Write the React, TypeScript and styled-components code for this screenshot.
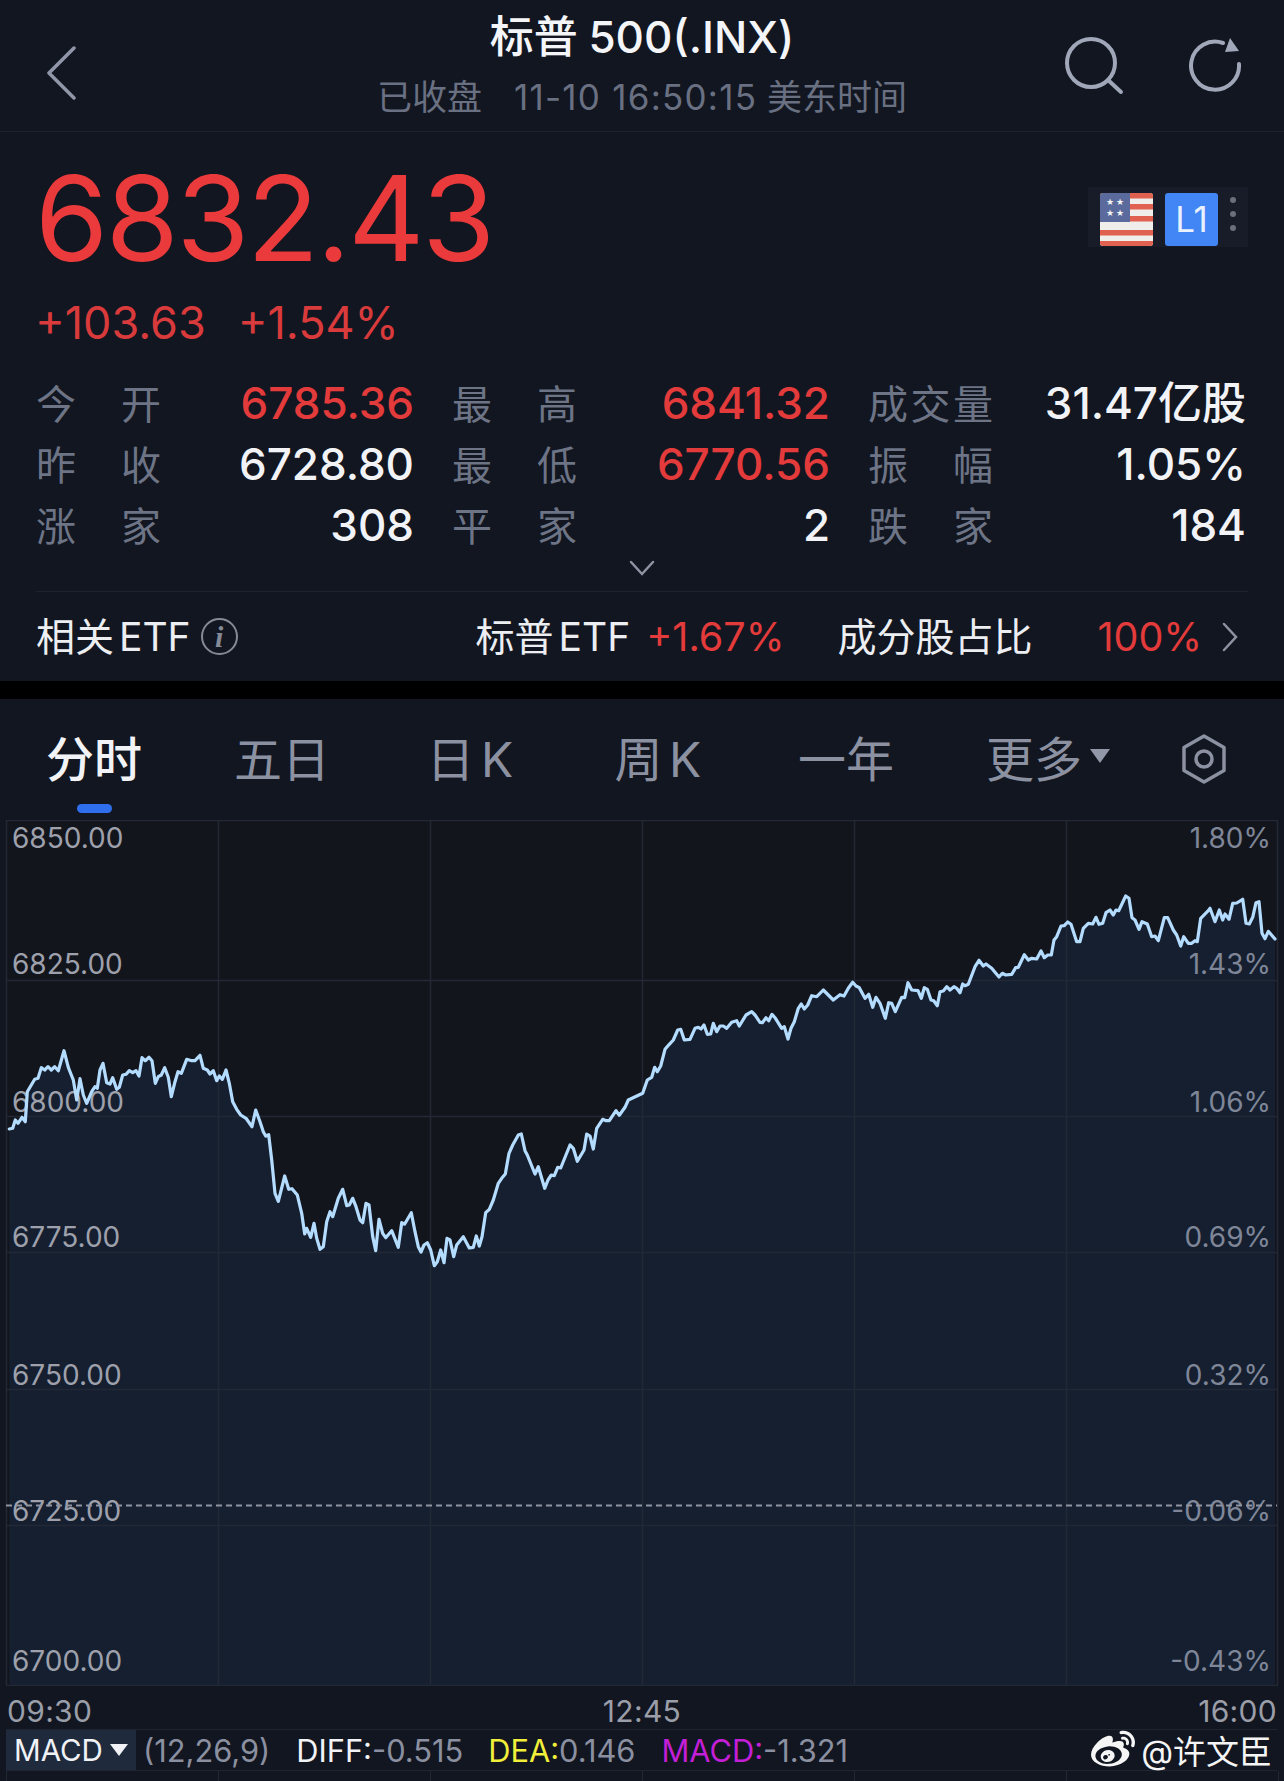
import React from "react";
import styled, { createGlobalStyle } from "styled-components";
import { FaWeibo } from "react-icons/fa";

const GlobalStyle = createGlobalStyle`
  html, body {
    margin: 0;
    padding: 0;
    background: #121620;
  }
  body {
    font-family: "Inter", "Noto Sans CJK SC", sans-serif;
  }
`;

const RED = "#e33b3b";
const GRID = "#232835";

const Page = styled.div`
  width: 1284px;
  height: 1781px;
  overflow: hidden;
  background: #121620;
  color: #f2f3f6;
`;

const Header = styled.header`
  height: 132px;
  box-sizing: border-box;
  border-bottom: 1px solid #1d212c;
  display: grid;
  grid-template-columns: 250px 1fr 250px;
`;

const BackCell = styled.div`
  padding: 46px 0 0 46px;
`;

const TitleCell = styled.div`
  padding-top: 12px;
  text-align: center;
`;

const Title = styled.div`
  font-size: 44px;
  line-height: 50px;
  font-weight: 500;
  color: #f4f5f8;
  word-spacing: -1px;
`;

const Subtitle = styled.div`
  margin-top: 17px;
  font-size: 35px;
  line-height: 36px;
  color: #697082;
  white-space: nowrap;
`;

const SubtitleStatus = styled.span`
  margin-right: 32px;
`;

const SubtitleTime = styled.span`
  letter-spacing: 1.25px;
`;

const IconCell = styled.div`
  display: flex;
  justify-content: flex-end;
  gap: 65px;
  padding: 36px 41px 0 0;
  align-items: flex-start;
  & > svg {
    flex-shrink: 0;
  }
`;

const Quote = styled.section`
  padding: 30px 36px 0 36px;
`;

const PriceRow = styled.div`
  display: flex;
  justify-content: space-between;
  align-items: flex-start;
`;

const Price = styled.div`
  margin-left: -1px;
  font-size: 118px;
  line-height: 112px;
  color: #ea3a3b;
  letter-spacing: -2.35px;
`;

const BadgePanel = styled.div`
  margin-top: 25px;
  width: 160px;
  height: 60px;
  box-sizing: border-box;
  padding: 6px 0 0 12px;
  display: flex;
  gap: 12px;
  background: #181c28;
`;

const LevelBadge = styled.div`
  width: 53px;
  height: 53px;
  border-radius: 3px;
  background: #4285f4;
  color: #eaf1fe;
  font-size: 35px;
  line-height: 53px;
  text-align: center;
`;

const Dots = styled.div`
  display: flex;
  flex-direction: column;
  gap: 8px;
  padding-top: 4px;
`;

const Dot = styled.i`
  display: block;
  width: 6px;
  height: 6px;
  border-radius: 50%;
  background: #6b6f7a;
`;

const ChangeRow = styled.div`
  margin: 24px 0 0 -1px;
  display: flex;
  gap: 32px;
  font-size: 45px;
  line-height: 50px;
  color: #d93a3b;
`;

const StatsGrid = styled.div`
  margin-top: 23px;
  display: grid;
  grid-template-columns: repeat(3, 378px);
  column-gap: 38px;
  grid-auto-rows: 61px;
`;

const StatCell = styled.div`
  display: flex;
  justify-content: space-between;
  align-items: center;
`;

const StatLabel = styled.span`
  width: 125px;
  display: flex;
  justify-content: space-between;
  font-size: 40px;
  color: #6d7486;
`;

const StatValue = styled.span<{ $up?: boolean }>`
  padding-top: 2px;
  font-size: 44px;
  line-height: 52px;
  font-weight: 500;
  color: ${(p) => (p.$up ? RED : "#f2f3f6")};
  white-space: nowrap;
`;

const ExpandRow = styled.div`
  height: 37px;
  padding-top: 6px;
  box-sizing: border-box;
  display: flex;
  justify-content: center;
  margin-left: -1px;
`;

const EtfRow = styled.div`
  margin: 0 36px;
  height: 90px;
  box-sizing: border-box;
  border-top: 1px solid #1f232e;
  display: flex;
  align-items: center;
  font-size: 39px;
  line-height: 46px;
  color: #eceef2;
  white-space: nowrap;
`;

const EtfName = styled.span`
  word-spacing: -6px;
`;

const InfoMark = styled.span`
  flex-shrink: 0;
  margin-left: 10px;
  width: 33px;
  height: 33px;
  border: 2px solid #858a97;
  border-radius: 50%;
  display: flex;
  align-items: center;
  justify-content: center;
  font-family: "Liberation Serif", serif;
  font-style: italic;
  font-weight: 700;
  font-size: 30px;
  color: #858a97;
`;

const EtfPart = styled.span<{ $left: number }>`
  margin-left: ${(p) => p.$left}px;
`;

const EtfSpaced = styled(EtfPart)`
  word-spacing: -6px;
`;

const EtfRed = styled(EtfPart)`
  color: ${RED};
  font-size: 39.5px;
`;

const EtfArrow = styled(EtfPart)`
  display: flex;
`;

const BlackBand = styled.div`
  height: 18px;
  background: #000;
`;

const Tabs = styled.nav`
  height: 121px;
  box-sizing: border-box;
  display: grid;
  grid-template-columns: repeat(6, 188px) 1fr;
  align-items: start;
  padding-top: 27px;
`;

const Tab = styled.div<{ $active?: boolean }>`
  position: relative;
  display: flex;
  justify-content: center;
  align-items: center;
  height: 60px;
  font-size: 48px;
  word-spacing: -7px;
  font-weight: ${(p) => (p.$active ? 500 : 400)};
  color: ${(p) => (p.$active ? "#f2f3f6" : "#8b91a1")};
  white-space: nowrap;
`;

const MoreTab = styled(Tab)`
  gap: 8px;
  padding-left: 28px;
`;

const ActiveMark = styled.i`
  position: absolute;
  left: 77px;
  top: 78px;
  width: 35px;
  height: 9px;
  border-radius: 4.5px;
  background: #2f6fed;
`;

const Caret = styled.i`
  width: 0;
  height: 0;
  border-left: 10px solid transparent;
  border-right: 10px solid transparent;
  border-top: 14px solid #9298a8;
`;

const SettingsCell = styled.div`
  display: flex;
  justify-content: center;
  padding-top: 8px;
  margin-left: -5px;
`;

const ChartSvg = styled.svg`
  display: block;
`;

const AxisText = styled.text<{ $tone: string }>`
  font-family: "Inter", sans-serif;
  font-size: 28px;
  fill: ${(p) => p.$tone};
`;

const TimeAxis = styled.div`
  height: 43px;
  box-sizing: border-box;
  padding: 6px 7px 0 7px;
  display: grid;
  grid-template-columns: 1fr 1fr 1fr;
  align-items: center;
  font-size: 30px;
  letter-spacing: 0.3px;
  color: #9a9ea9;
  & > span:nth-child(2) {
    text-align: center;
  }
  & > span:nth-child(3) {
    text-align: right;
  }
`;

const IndicatorRow = styled.div`
  margin: 0 7px 0 6px;
  height: 42px;
  box-sizing: border-box;
  border-top: 1px solid #1f2430;
  border-bottom: 1px solid #1f2430;
  display: flex;
  align-items: center;
  font-size: 30.8px;
  white-space: nowrap;
  color: #8b90a0;
`;

const IndicatorPicker = styled.div`
  width: 130px;
  height: 40px;
  box-sizing: border-box;
  padding-left: 8px;
  display: flex;
  align-items: center;
  gap: 7px;
  font-size: 29.5px;
  background: #1f2a3d;
  color: #f0f2f6;
`;

const PickerCaret = styled.i`
  width: 0;
  height: 0;
  border-left: 9px solid transparent;
  border-right: 9px solid transparent;
  border-top: 12px solid #f0f2f6;
`;

const Param = styled.span<{ $left: number }>`
  margin-left: ${(p) => p.$left}px;
`;

const Key = styled.span<{ $tone: string }>`
  color: ${(p) => p.$tone};
`;

const Watermark = styled.div`
  margin-left: auto;
  margin-right: 5px;
  display: flex;
  align-items: center;
  gap: 6px;
  font-size: 33px;
  color: #f5f5f5;
`;

const Tail = styled.div`
  height: 11px;
  margin-left: 6px;
  background: repeating-linear-gradient(
    to right,
    ${GRID} 0 1px,
    transparent 1px 212px
  );
`;

const trace = (ox: number, oy: number, pts: number[][]) =>
  pts.map(([x, y]) => [ox + x / 3, oy + y / 3]);

// hand-traced from the intraday curve, in 3x crop coordinates
const curve = [
  ...trace(0, 1040, [
    [28, 267], [38, 265], [46, 240], [54, 250], [66, 232], [76, 245], [82, 155], [92, 138], [104, 118], [114, 115],
    [124, 83], [134, 90], [144, 80], [154, 90], [164, 80], [175, 92], [192, 32], [205, 82], [220, 120], [230, 180],
    [240, 116], [250, 165], [260, 190], [275, 155], [285, 140], [292, 145], [300, 90], [309, 70], [320, 128], [330, 132],
    [338, 113], [350, 148], [358, 142], [368, 105], [378, 103], [388, 92], [398, 98], [408, 92], [417, 108], [426, 53],
    [436, 62], [447, 52], [456, 62], [466, 130], [475, 110], [484, 105], [494, 83], [505, 112], [514, 170], [525, 125],
    [534, 95], [544, 100], [560, 58], [575, 62], [585, 62], [600, 46], [610, 85], [622, 90], [630, 102], [640, 92],
    [650, 122], [658, 108], [667, 118], [678, 90], [688, 130], [698, 185], [710, 208], [722, 225], [738, 235], [756, 260],
    [767, 210], [780, 245], [790, 275], [797, 288], [806, 284], [815, 360], [825, 460], [835, 484], [854, 408], [866, 448],
    [876, 446], [892, 465], [905, 520], [914, 582], [920, 565], [932, 592], [942, 550], [950, 595],
  ]),
  ...trace(320, 1100, [
    [0, 448], [10, 440], [20, 365], [30, 335], [38, 350], [55, 295], [68, 268], [80, 317], [88, 315], [98, 295],
    [108, 320], [120, 360], [128, 368], [138, 310], [147, 315], [158, 410], [167, 452], [177, 358], [188, 400], [197, 413],
    [215, 392], [235, 442], [245, 368], [254, 372], [274, 338], [285, 395], [295, 440], [303, 456], [312, 435], [322, 428],
    [332, 450], [343, 497], [352, 485], [362, 450], [372, 488], [381, 415], [390, 420], [401, 470], [410, 435], [430, 410],
    [448, 444], [460, 442], [469, 408], [478, 438], [486, 410], [497, 338], [508, 328], [520, 300], [535, 250], [545, 235],
    [556, 222], [567, 160], [578, 135], [595, 105], [604, 102], [615, 152], [622, 165], [645, 222], [655, 200], [674, 265],
    [684, 240], [694, 225], [703, 227], [713, 202], [722, 204], [750, 135], [760, 145], [772, 184], [792, 150], [800, 102],
    [810, 108], [820, 147], [830, 85], [848, 58], [858, 62], [868, 62], [888, 32], [898, 46], [915, 22], [925, 0],
  ]),
  ...trace(640, 950, [
    [8, 430], [22, 390], [35, 382], [44, 352], [52, 365], [62, 348], [75, 298], [88, 283], [100, 270], [113, 240],
    [122, 238], [133, 270], [150, 268], [165, 235], [175, 232], [183, 237], [192, 225], [202, 253], [212, 252], [220, 220],
    [230, 245], [240, 228], [250, 228], [260, 235], [275, 217], [290, 212], [298, 228], [318, 195], [335, 185], [345, 195],
    [360, 217], [367, 218], [378, 203], [386, 212], [396, 193], [405, 203], [425, 235], [433, 230], [444, 267], [453, 235],
    [463, 215], [475, 175], [484, 162], [493, 177], [503, 165], [515, 137], [530, 140], [550, 120], [580, 150], [600, 134],
    [612, 138], [625, 115], [638, 97], [648, 108], [658, 113], [675, 145], [686, 133], [698, 172], [708, 142], [720, 160],
    [736, 205], [746, 158], [755, 160], [766, 185], [785, 142], [794, 143], [804, 98], [815, 120], [834, 122], [844, 145],
    [853, 113], [862, 118], [873, 150], [881, 152], [892, 167], [900, 125], [910, 123], [920, 110], [930, 120], [942, 110],
    [950, 115],
  ]),
  ...trace(960, 880, [
    [0, 338], [8, 312], [15, 317], [25, 313], [45, 260], [57, 241], [70, 258], [78, 252], [95, 265], [105, 277],
    [117, 291], [127, 280], [137, 285], [155, 283], [167, 263], [175, 262], [193, 224], [205, 240], [215, 235], [230, 237],
    [243, 213], [253, 233], [263, 225], [274, 225], [282, 180], [290, 170], [303, 138], [313, 137], [323, 126], [333, 133],
    [350, 185], [360, 185], [370, 145], [385, 130], [398, 132], [408, 112], [417, 133], [428, 130], [438, 98], [450, 90],
    [460, 105], [468, 90], [476, 92], [497, 48], [507, 55], [516, 113], [525, 120], [537, 148], [546, 125], [562, 132],
    [575, 170], [585, 168], [595, 182], [613, 113], [623, 113], [640, 150], [650, 165], [662, 198], [671, 170], [685, 190],
    [695, 190], [705, 182], [712, 185], [722, 115], [745, 92], [750, 85], [765, 125], [778, 90], [788, 120], [795, 102],
    [807, 118], [818, 70], [830, 69], [848, 58], [858, 130], [868, 132], [878, 112], [888, 68], [897, 65], [906, 160],
    [915, 176], [925, 154], [945, 177],
  ]),
];

const linePath = curve.map(([x, y], i) => `${i ? "L" : "M"}${x.toFixed(1)} ${y.toFixed(1)}`).join(" ");
const CHART_BOTTOM = 1685;
const areaPath = `${linePath} L${curve[curve.length - 1][0].toFixed(1)} ${CHART_BOTTOM} L${curve[0][0].toFixed(1)} ${CHART_BOTTOM} Z`;

const gridRows = [820, 980, 1116, 1252, 1389, 1525, 1685];
const gridCols = [6, 218, 430, 642, 854, 1066, 1277];

const axisLabels = [
  { y: 848, price: "6850.00", pct: "1.80%" },
  { y: 974, price: "6825.00", pct: "1.43%" },
  { y: 1112, price: "6800.00", pct: "1.06%" },
  { y: 1247, price: "6775.00", pct: "0.69%" },
  { y: 1385, price: "6750.00", pct: "0.32%" },
  { y: 1521, price: "6725.00", pct: "-0.06%" },
  { y: 1671, price: "6700.00", pct: "-0.43%" },
];

const stats = [
  { label: ["今", "开"], value: "6785.36", up: true },
  { label: ["最", "高"], value: "6841.32", up: true },
  { label: ["成", "交", "量"], value: "31.47亿股" },
  { label: ["昨", "收"], value: "6728.80" },
  { label: ["最", "低"], value: "6770.56", up: true },
  { label: ["振", "幅"], value: "1.05%" },
  { label: ["涨", "家"], value: "308" },
  { label: ["平", "家"], value: "2" },
  { label: ["跌", "家"], value: "184" },
];

const tabs = ["五日", "日 K", "周 K", "一年"];

const ICON = "#a0a7b8";

const BackIcon = () => (
  <svg width="30" height="54" viewBox="0 0 30 54" fill="none">
    <path d="M28 2 L3 27 L28 52" stroke="#9097a8" strokeWidth="3.5" strokeLinecap="round" strokeLinejoin="round" />
  </svg>
);

const SearchIcon = () => (
  <svg width="60" height="60" viewBox="0 0 60 60" fill="none">
    <circle cx="27" cy="27" r="24" stroke={ICON} strokeWidth="4" />
    <path d="M44 44 L57 56" stroke={ICON} strokeWidth="4" strokeLinecap="round" />
  </svg>
);

const RefreshIcon = () => (
  <svg width="54" height="56" viewBox="0 0 54 56" fill="none">
    <path d="M50 28 A24 24 0 1 1 34 7" stroke={ICON} strokeWidth="4" strokeLinecap="round" />
    <path d="M41 2 L50 15 L36 16 Z" fill={ICON} />
  </svg>
);

const ChevronDown = () => (
  <svg width="26" height="16" viewBox="0 0 26 16" fill="none">
    <path d="M2 2 L13 14 L24 2" stroke="#8d93a2" strokeWidth="2.5" strokeLinecap="round" />
  </svg>
);

const ChevronRight = () => (
  <svg width="18" height="30" viewBox="0 0 18 30" fill="none">
    <path d="M3 2 L15 15 L3 28" stroke="#8d93a2" strokeWidth="2.5" strokeLinecap="round" />
  </svg>
);

const HexIcon = () => (
  <svg width="46" height="50" viewBox="0 0 46 50" fill="none">
    <path d="M23 2 L43 13.5 L43 36.5 L23 48 L3 36.5 L3 13.5 Z" stroke="#8b91a1" strokeWidth="3.5" strokeLinejoin="round" />
    <circle cx="23" cy="25" r="8" stroke="#8b91a1" strokeWidth="3.5" />
  </svg>
);

const FlagIcon = () => (
  <svg width="53" height="53" viewBox="0 0 53 53">
    <defs>
      <clipPath id="flagClip">
        <rect width="53" height="53" rx="3" />
      </clipPath>
    </defs>
    <g clipPath="url(#flagClip)">
      <rect width="53" height="53" fill="#f0eeea" />
      {[0, 11, 23, 37, 48].map((y) => (
        <rect key={y} y={y} width="53" height="5.5" fill="#e0614f" />
      ))}
      <rect width="30" height="29" fill="#5a6a9c" />
      {[
        [10, 9],
        [20, 9],
        [10, 20],
        [20, 20],
      ].map(([x, y]) => (
        <text key={`${x}-${y}`} x={x} y={y + 3} fontSize="9" fill="#f4f4f6" textAnchor="middle" fontFamily="DejaVu Sans">
          ★
        </text>
      ))}
    </g>
  </svg>
);

const App: React.FC = () => {
  return (
    <Page>
      <GlobalStyle />
      <Header>
        <BackCell>
          <BackIcon />
        </BackCell>
        <TitleCell>
          <Title>标普 500(.INX)</Title>
          <Subtitle>
            <SubtitleStatus>已收盘</SubtitleStatus>
            <SubtitleTime>11-10 16:50:15</SubtitleTime> 美东时间
          </Subtitle>
        </TitleCell>
        <IconCell>
          <SearchIcon />
          <RefreshIcon />
        </IconCell>
      </Header>

      <Quote>
        <PriceRow>
          <Price>6832.43</Price>
          <BadgePanel>
            <FlagIcon />
            <LevelBadge>L1</LevelBadge>
            <Dots>
              <Dot />
              <Dot />
              <Dot />
            </Dots>
          </BadgePanel>
        </PriceRow>
        <ChangeRow>
          <span>+103.63</span>
          <span>+1.54%</span>
        </ChangeRow>
        <StatsGrid>
          {stats.map((s) => (
            <StatCell key={s.label.join("") + s.value}>
              <StatLabel>
                {s.label.map((c, i) => (
                  <span key={i}>{c}</span>
                ))}
              </StatLabel>
              <StatValue $up={s.up}>{s.value}</StatValue>
            </StatCell>
          ))}
        </StatsGrid>
        <ExpandRow>
          <ChevronDown />
        </ExpandRow>
      </Quote>

      <EtfRow>
        <EtfName>相关 ETF</EtfName>
        <InfoMark>i</InfoMark>
        <EtfSpaced $left={238}>标普 ETF</EtfSpaced>
        <EtfRed $left={16}>+1.67%</EtfRed>
        <EtfPart $left={53}>成分股占比</EtfPart>
        <EtfRed $left={65}>100%</EtfRed>
        <EtfArrow $left={19}>
          <ChevronRight />
        </EtfArrow>
      </EtfRow>

      <BlackBand />

      <Tabs>
        <Tab $active>
          分时
          <ActiveMark />
        </Tab>
        {tabs.map((t) => (
          <Tab key={t}>{t}</Tab>
        ))}
        <MoreTab>
          更多
          <Caret />
        </MoreTab>
        <SettingsCell>
          <HexIcon />
        </SettingsCell>
      </Tabs>

      <ChartSvg width="1284" height="866" viewBox="0 820 1284 866">
        <rect x="6" y="820" width="1271" height="865" fill="#13151d" />
        <path d={areaPath} fill="#151f30" />
        {gridRows.map((y) => (
          <line key={y} x1="6" x2="1277" y1={y + 0.5} y2={y + 0.5} stroke={GRID} strokeWidth="1.5" />
        ))}
        {gridCols.map((x) => (
          <line key={x} x1={x + 0.5} x2={x + 0.5} y1="820" y2="1686" stroke={GRID} strokeWidth="1.5" />
        ))}
        {axisLabels.map((l) => (
          <React.Fragment key={l.y}>
            <AxisText x="12" y={l.y} $tone="#9ea1ac">
              {l.price}
            </AxisText>
            <AxisText x="1271" y={l.y} textAnchor="end" $tone="#7f8698">
              {l.pct}
            </AxisText>
          </React.Fragment>
        ))}
        <line x1="6" x2="1277" y1="1505.5" y2="1505.5" stroke="#8f94a0" strokeWidth="2" strokeDasharray="6 4" />
        <path d={linePath} fill="none" stroke="#b4dcff" strokeWidth="3.2" strokeLinejoin="round" strokeLinecap="round" />
      </ChartSvg>

      <TimeAxis>
        <span>09:30</span>
        <span>12:45</span>
        <span>16:00</span>
      </TimeAxis>

      <IndicatorRow>
        <IndicatorPicker>
          MACD
          <PickerCaret />
        </IndicatorPicker>
        <Param $left={7}>(12,26,9)</Param>
        <Param $left={26}>
          <Key $tone="#f2f3f6">DIFF:</Key>-0.515
        </Param>
        <Param $left={25}>
          <Key $tone="#f1ef3a">DEA:</Key>0.146
        </Param>
        <Param $left={26}>
          <Key $tone="#c21fd6">MACD:</Key>-1.321
        </Param>
        <Watermark>
          <FaWeibo size={44} />
          <span>@许文臣</span>
        </Watermark>
      </IndicatorRow>

      <Tail />
    </Page>
  );
};

export default App;
